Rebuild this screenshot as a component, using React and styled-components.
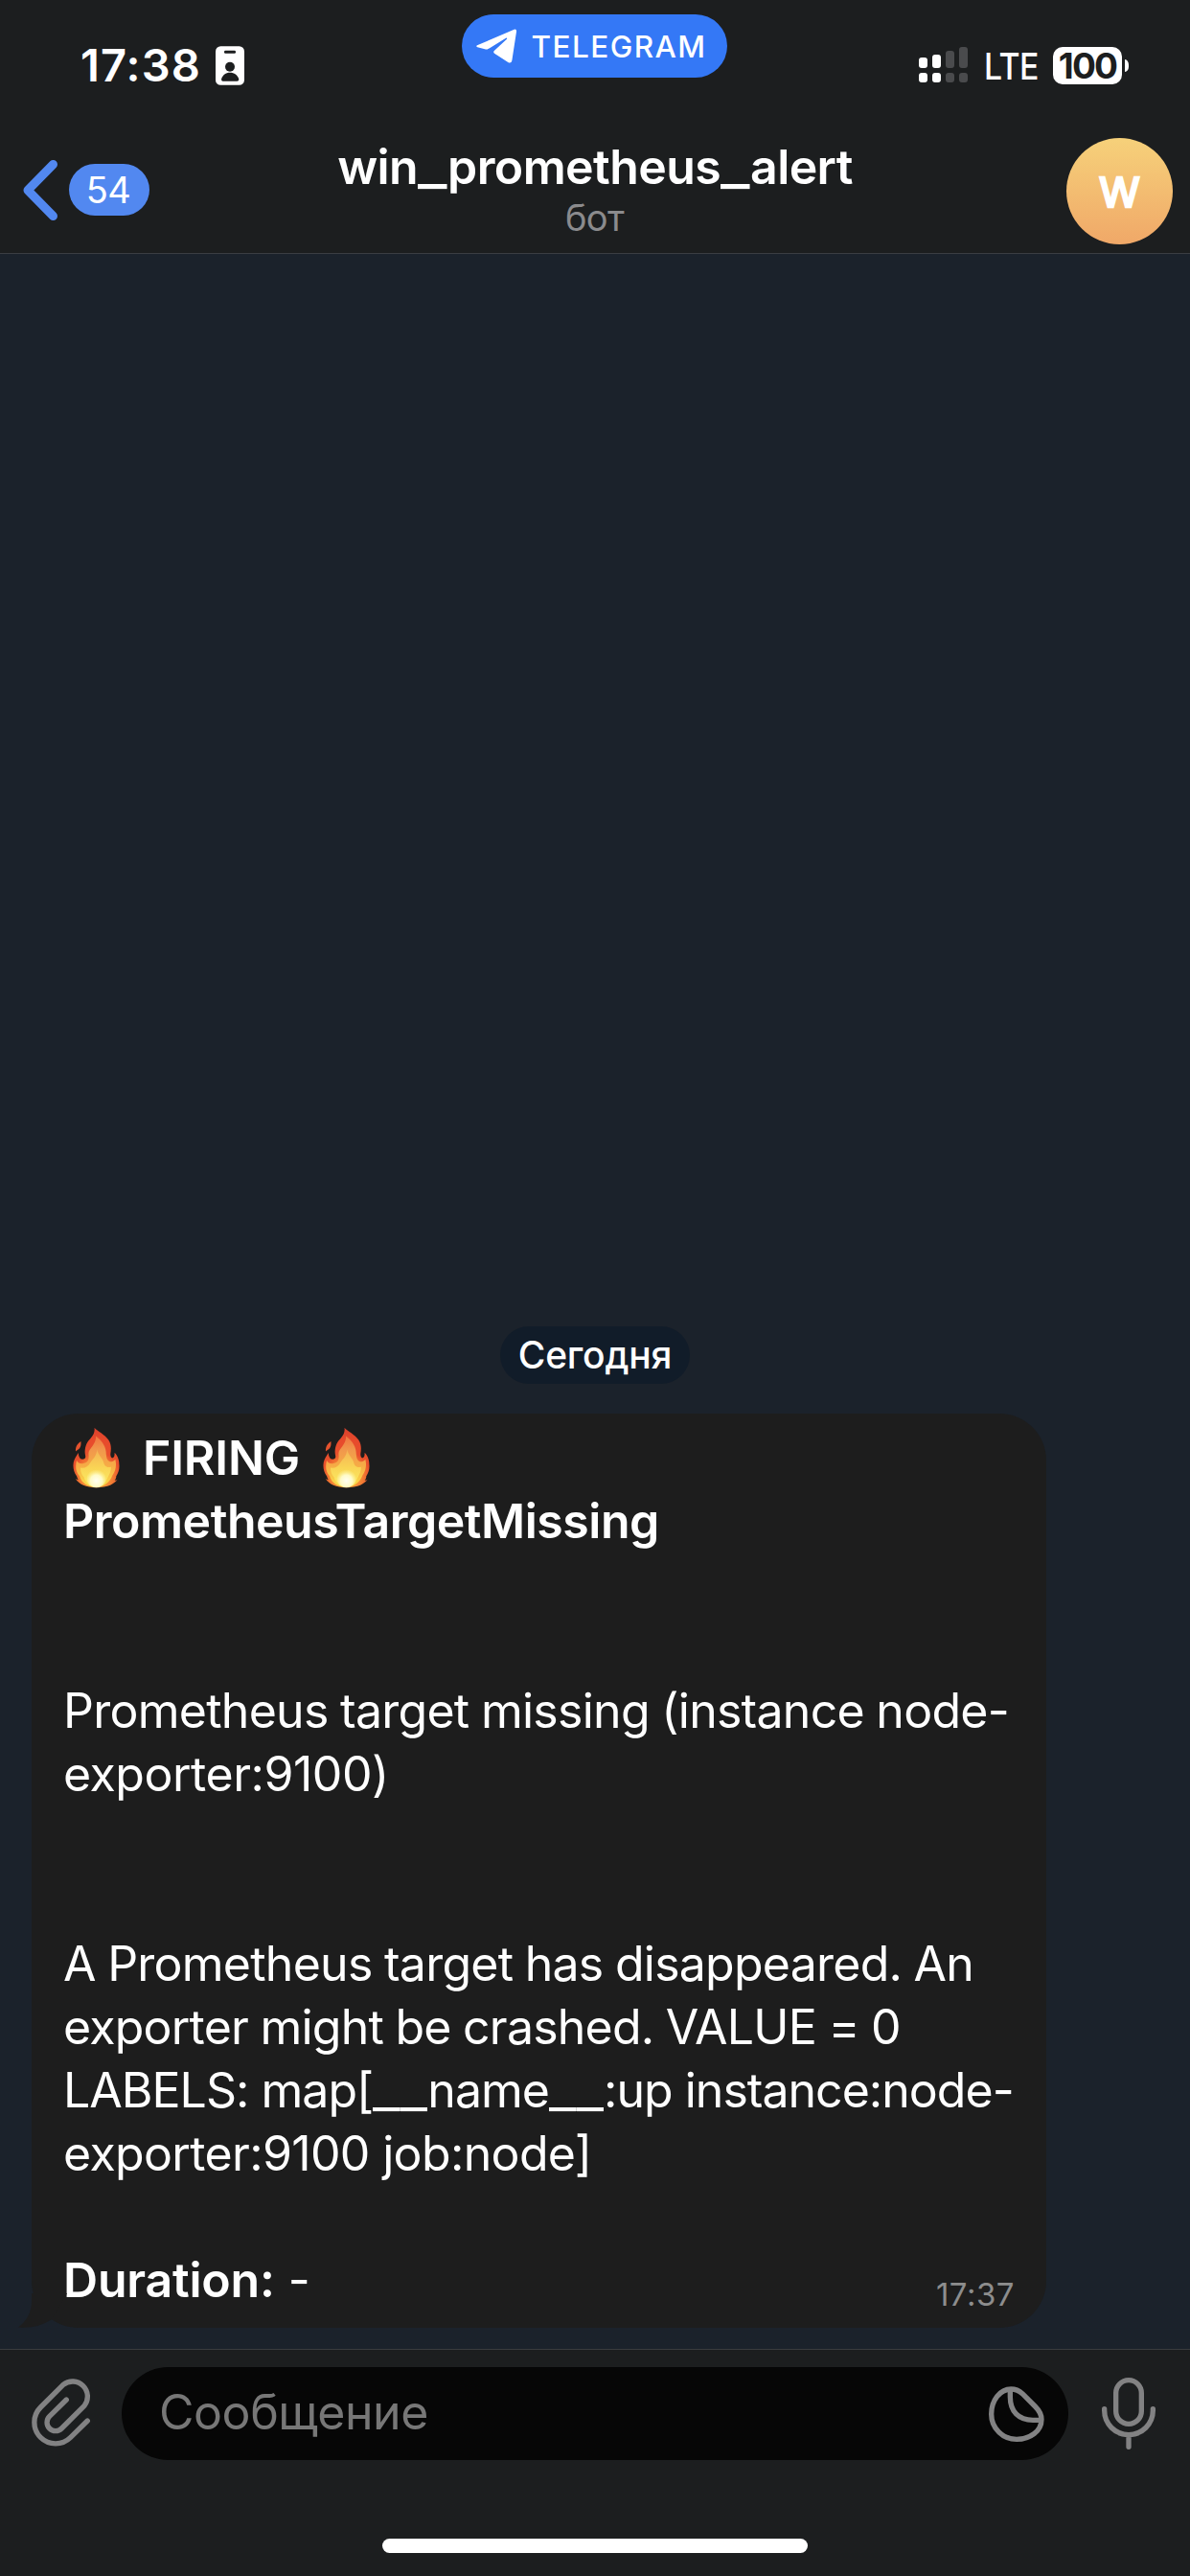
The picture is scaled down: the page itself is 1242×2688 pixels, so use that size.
import React from "react";
import styled, { createGlobalStyle } from "styled-components";

const GlobalStyle = createGlobalStyle`
  * { box-sizing: border-box; }
  body {
    margin: 0;
    background: #1c1e1f;
    font-family: Inter, "Liberation Sans", sans-serif;
    color: #fff;
  }
`;

const Screen = styled.div`
  display: flex;
  flex-direction: column;
  width: 1242px;
  height: 2688px;
  overflow: hidden;
  background: #1b222b;
`;

/* ---------- header ---------- */
const Header = styled.header`
  height: 265px;
  background: #1c1e1f;
  border-bottom: 1px solid #3a3d42;
`;

const StatusBar = styled.div`
  display: grid;
  grid-template-columns: 482px 277px 1fr;
  height: 132px;
`;

const ClockGroup = styled.div`
  display: flex;
  align-items: center;
  gap: 15px;
  height: 60px;
  margin: 38px 0 0 84px;
`;

const Clock = styled.span`
  font-size: 47px;
  font-weight: 600;
  line-height: 60px;
  letter-spacing: 1.1px;
`;

const AppPill = styled.div`
  display: flex;
  align-items: center;
  gap: 15px;
  height: 66px;
  margin-top: 15px;
  padding-left: 15px;
  border-radius: 33px;
  background: #3478f6;
`;

const AppName = styled.span`
  font-size: 31.5px;
  font-weight: 500;
  letter-spacing: 1.45px;
`;

const Radio = styled.div`
  display: flex;
  align-items: center;
  height: 40px;
  margin: 48px 0 0 200px;
`;

const Network = styled.span`
  width: 72px;
  margin: 2px 0 0 17px;
  font-size: 38px;
  font-weight: 500;
  letter-spacing: -0.5px;
  transform: scaleX(0.89);
  transform-origin: left;
`;

const Battery = styled.span`
  width: 72px;
  height: 39px;
  border-radius: 10px;
  background: #fff;
  color: #1c1e1f;
  font-size: 37px;
  font-weight: 700;
  line-height: 39px;
  letter-spacing: -1.8px;
  text-align: center;
`;

const BatteryTip = styled.span`
  width: 4px;
  height: 13px;
  margin-left: 3px;
  border-radius: 0 5px 5px 0 / 0 7px 7px 0;
  background: #fff;
`;

const NavBar = styled.div`
  display: grid;
  grid-template-columns: 240px 1fr 240px;
  height: 132px;
`;

const BackButton = styled.div`
  display: flex;
  align-items: center;
  gap: 12px;
  padding-left: 24px;
`;

const UnreadBadge = styled.span`
  width: 84px;
  height: 54px;
  padding-right: 2px;
  border-radius: 27px;
  background: #5288f0;
  font-size: 38px;
  line-height: 54px;
  letter-spacing: -0.6px;
  text-align: center;
`;

const Heading = styled.div`
  display: flex;
  flex-direction: column;
  align-items: center;
  padding-top: 12px;
`;

const Title = styled.span`
  font-size: 50px;
  font-weight: 600;
  line-height: 60px;
  letter-spacing: -0.6px;
`;

const Subtitle = styled.span`
  padding-right: 1px;
  color: #8b8b8d;
  font-size: 38px;
  line-height: 46px;
  letter-spacing: -0.6px;
`;

const Avatar = styled.div`
  justify-self: end;
  width: 111px;
  height: 111px;
  margin: 12px 18px 0 0;
  border-radius: 50%;
  background: linear-gradient(#f6d17a, #f0a868);
  font-size: 43px;
  font-weight: 400;
  line-height: 113px;
  text-align: center;
  -webkit-text-stroke: 2.6px #fff;
  stroke-linejoin: round;
`;

const Underscore = styled.span`
  display: inline-block;
  width: ${(p) => p.$width}px;
  letter-spacing: 0;
  transform: scaleX(${(p) => p.$stretch});
  transform-origin: left;
`;

/* ---------- conversation ---------- */
const Conversation = styled.main`
  display: flex;
  flex: 1;
  flex-direction: column;
  justify-content: flex-end;
  align-items: flex-start;
  gap: 31px;
  padding: 0 0 22px 33px;
`;

const DateLabel = styled.div`
  align-self: center;
  width: 198px;
  height: 60px;
  margin-right: 33px;
  border-radius: 30px;
  background: #111c29;
  font-size: 39px;
  font-weight: 500;
  line-height: 59px;
  letter-spacing: -0.2px;
  text-align: center;
`;

const Bubble = styled.article`
  position: relative;
  width: 1059px;
  padding: 13px 33px 17px;
  border-radius: 49px;
  background: #1d1d1d;
`;

const BubbleTail = styled.svg`
  position: absolute;
  left: -15px;
  bottom: 0;
`;

const Line = styled.div`
  display: flex;
  align-items: center;
  height: 66px;
  font-size: 50px;
  font-weight: ${(p) => (p.$bold ? 600 : 400)};
  line-height: 66px;
  letter-spacing: ${(p) => p.$tracking || 0}px;
  word-spacing: ${(p) => p.$wordGap || 0}px;
  white-space: pre;
`;

const AlertLine = styled(Line)`
  gap: 24px;
  padding-left: 10px;
`;

const LastRow = styled.div`
  display: flex;
  justify-content: space-between;
`;

const Label = styled.strong`
  font-weight: 600;
  letter-spacing: -0.2px;
`;

const SentAt = styled.time`
  margin: 33px 0 0;
  color: #8d8d8d;
  font-size: 33px;
  line-height: 30px;
  letter-spacing: 0.5px;
`;

/* ---------- composer ---------- */
const Composer = styled.footer`
  display: flex;
  flex-direction: column;
  align-items: center;
  height: 237px;
  padding-top: 18px;
  border-top: 1px solid #3b3c3e;
  background: #1c1e1f;
`;

const ComposerRow = styled.div`
  display: flex;
  align-items: center;
  width: 1242px;
  padding: 0 36px 0 33px;
`;

const AttachButton = styled.div`
  display: flex;
  padding-bottom: 4px;
`;

const Field = styled.div`
  display: flex;
  flex: 1;
  align-items: center;
  justify-content: space-between;
  height: 97px;
  margin: 0 35px 0 31px;
  padding: 0 25px 0 39px;
  border-radius: 49px;
  background: #060606;
`;

const Placeholder = styled.span`
  padding-bottom: 4px;
  color: #777;
  font-size: 50px;
  letter-spacing: -0.45px;
`;

const HomeIndicator = styled.div`
  width: 444px;
  height: 15px;
  margin-top: 82px;
  border-radius: 8px;
  background: #fff;
`;

/* ---------- drawings ---------- */
const IdBadge = () => (
  <svg width="30" height="41" viewBox="675 142 90 122">
    <rect x="675" y="142" width="90" height="122" rx="16" fill="#fff" />
    <g fill="#1c1e1f">
      <rect x="702" y="156" width="36" height="9" rx="4" />
      <circle cx="720" cy="207" r="15" />
      <path d="M693 246C697 232 707 225 720 225S744 232 748 246Q748 252 742 252H698Q693 252 693 246Z" />
    </g>
  </svg>
);

const Plane = () => (
  <svg width="42.5" height="36" viewBox="231 92 127.5 108">
    <path fill="#fff" d="M234 144L350 94Q358 92 357 101L343 192Q341 201 332 198L288 169Q283 165 288 160L327 124Q329 120 324 121L273 153Q266 158 258 156L235 150Q229 147 234 144Z" />
  </svg>
);

const bars = [60, 57, 53, 49];
const Signal = () => (
  <svg width="51" height="38" viewBox="959 49 51 38">
    {bars.map((top, i) => (
      <g key={top} fill={i < 2 ? "#fff" : "#4a4b4d"}>
        <rect x={959 + i * 14} y={top} width="9" height={71 - top} rx="3" />
        <rect x={959 + i * 14} y="76" width="9" height="10" rx="3" />
      </g>
    ))}
  </svg>
);

const Chevron = () => (
  <svg width="36" height="63" viewBox="0 0 36 63">
    <path d="M31.5 4.5L5 31.5L31.5 58.5" fill="none" stroke="#5288f0" strokeWidth="9" strokeLinecap="round" strokeLinejoin="round" />
  </svg>
);

const Flame = () => (
  <svg width="49" height="64" viewBox="49 28 146 190" role="img" aria-label="🔥">
    <defs>
      <radialGradient id="flameOuter" gradientUnits="userSpaceOnUse" cx="122" cy="180" r="150">
        <stop offset="0" stopColor="#fbc542" />
        <stop offset="0.3" stopColor="#f58a35" />
        <stop offset="0.5" stopColor="#e8502c" />
        <stop offset="0.75" stopColor="#e74a2c" />
        <stop offset="1" stopColor="#d9402c" />
      </radialGradient>
      <linearGradient id="flameMid" gradientUnits="userSpaceOnUse" x1="0" y1="50" x2="0" y2="214">
        <stop offset="0" stopColor="#f0703f" />
        <stop offset="0.3" stopColor="#f1984c" />
        <stop offset="0.6" stopColor="#f6ac45" />
        <stop offset="1" stopColor="#fbe04a" />
      </linearGradient>
      <linearGradient id="flameInner" gradientUnits="userSpaceOnUse" x1="0" y1="95" x2="0" y2="214">
        <stop offset="0" stopColor="#f4b155" />
        <stop offset="0.5" stopColor="#f9d455" />
        <stop offset="1" stopColor="#fcee66" />
      </linearGradient>
      <radialGradient id="flameCore" gradientUnits="userSpaceOnUse" cx="122" cy="195" r="36">
        <stop offset="0" stopColor="#fffff2" />
        <stop offset="0.5" stopColor="#fffbc8" />
        <stop offset="1" stopColor="#fdf08a" stopOpacity="0" />
      </radialGradient>
    </defs>
    <path fill="url(#flameOuter)" d="M116 30C126 42 148 50 160 68C170 84 168 98 166 112C166 120 169 125 173 124C179 122 179 114 179 107C188 116 193 128 193 142C195 158 191 170 184 180C184 186 182 190 179 194C184 194 186 192 188 190C180 204 158 216 122 216C90 216 68 206 57 188C60 190 63 192 66 192C64 188 62 184 61 180C52 168 49 154 51 140C53 126 60 120 66 108C67 118 70 128 79 128C86 128 90 124 88 116C85 104 87 92 92 80C100 64 120 54 116 30Z" />
    <path fill="#e5532e" d="M74 72C75 82 74 88 70 94C66 98 61 100 58 104C57 92 60 82 74 72Z" />
    <path fill="url(#flameMid)" d="M121 56C134 66 151 84 152 104C153 120 154 134 166 136C174 136 178 132 181 128C186 148 182 164 172 178C164 200 146 214 122 214C96 214 76 202 70 180C58 168 56 150 61 132C66 140 72 143 82 141C96 138 100 130 98 112C96 96 122 84 121 56Z" />
    <path fill="url(#flameInner)" d="M124 98C128 116 144 128 146 142C150 152 160 154 168 152C168 166 162 176 158 184C150 204 140 214 122 214C102 214 88 202 84 184C76 176 72 166 73 154C84 158 96 152 104 138C112 126 124 118 124 98Z" />
    <ellipse cx="122" cy="188" rx="30" ry="28" fill="url(#flameCore)" />
  </svg>
);

const iconStroke = { fill: "none", stroke: "#828283", strokeWidth: 16, strokeLinecap: "round", strokeLinejoin: "round" };

const Paperclip = () => (
  <svg width="63" height="72" viewBox="97 423 189 216">
    <path {...iconStroke} d="M272 558L219 610A66 66 0 0 1 125 516L196 445A47 47 0 0 1 262 511L191 582A26.500 26.500 0 0 1 153 544L206 492" />
  </svg>
);

const Sticker = () => (
  <svg width="58" height="58" viewBox="577 446 174 174">
    <path {...iconStroke} d="M664 612C620 612 585 577 585 533C585 490 612 455 647 455C662 455 672 460 682 469L722 509C735 522 742 536 742 550C742 585 708 612 664 612Z" />
    <path {...iconStroke} strokeLinecap="butt" d="M644 457V480C644 525 670 552 715 552H740" />
  </svg>
);

const Mic = () => (
  <svg width="56" height="75" viewBox="930 423 168 225">
    <rect {...iconStroke} x="974" y="431" width="80" height="137" rx="40" />
    <path {...iconStroke} d="M938 521V526A76 76 0 0 0 1090 526V521M1014 602V640" />
  </svg>
);

export default function App() {
  return (
    <Screen>
      <GlobalStyle />
      <Header>
        <StatusBar>
          <ClockGroup>
            <Clock>17:38</Clock>
            <IdBadge />
          </ClockGroup>
          <AppPill>
            <Plane />
            <AppName>TELEGRAM</AppName>
          </AppPill>
          <Radio>
            <Signal />
            <Network>LTE</Network>
            <Battery>100</Battery>
            <BatteryTip />
          </Radio>
        </StatusBar>
        <NavBar>
          <BackButton>
            <Chevron />
            <UnreadBadge>54</UnreadBadge>
          </BackButton>
          <Heading>
            <Title>
              win<Underscore $width={31} $stretch={1.3}>_</Underscore>
              prometheus<Underscore $width={31} $stretch={1.3}>_</Underscore>alert
            </Title>
            <Subtitle>бот</Subtitle>
          </Heading>
          <Avatar>W</Avatar>
        </NavBar>
      </Header>

      <Conversation>
        <DateLabel>Сегодня</DateLabel>
        <Bubble>
          <BubbleTail width="64" height="36" viewBox="18 2393 64 36">
            <path fill="#1d1d1d" d="M33 2393V2401Q33 2418 19 2428.500Q38 2430.500 53.500 2420.500L70 2393Z" />
          </BubbleTail>
          <AlertLine $bold $tracking={-0.2}>
            <Flame />
            <span>FIRING</span>
            <Flame />
          </AlertLine>
          <Line $bold $tracking={-0.48}>PrometheusTargetMissing</Line>
          <Line />
          <Line />
          <Line $tracking={-0.73} $wordGap={-0.9}>Prometheus target missing (instance node-</Line>
          <Line $tracking={-0.48}>exporter:9100)</Line>
          <Line />
          <Line />
          <Line $tracking={-0.75} $wordGap={-0.9}>A Prometheus target has disappeared. An</Line>
          <Line $tracking={-0.78} $wordGap={-0.9}>exporter might be crashed. VALUE = 0</Line>
          <Line $tracking={-0.98}>
            LABELS: map[<Underscore $width={57} $stretch={1.25}>__</Underscore>
            name<Underscore $width={57} $stretch={1.25}>__</Underscore>:up instance:node-
          </Line>
          <Line $tracking={-0.65}>exporter:9100 job:node]</Line>
          <Line />
          <LastRow>
            <Line><Label>Duration:</Label> -</Line>
            <SentAt>17:37</SentAt>
          </LastRow>
        </Bubble>
      </Conversation>

      <Composer>
        <ComposerRow>
          <AttachButton>
            <Paperclip />
          </AttachButton>
          <Field>
            <Placeholder>Сообщение</Placeholder>
            <Sticker />
          </Field>
          <Mic />
        </ComposerRow>
        <HomeIndicator />
      </Composer>
    </Screen>
  );
}
